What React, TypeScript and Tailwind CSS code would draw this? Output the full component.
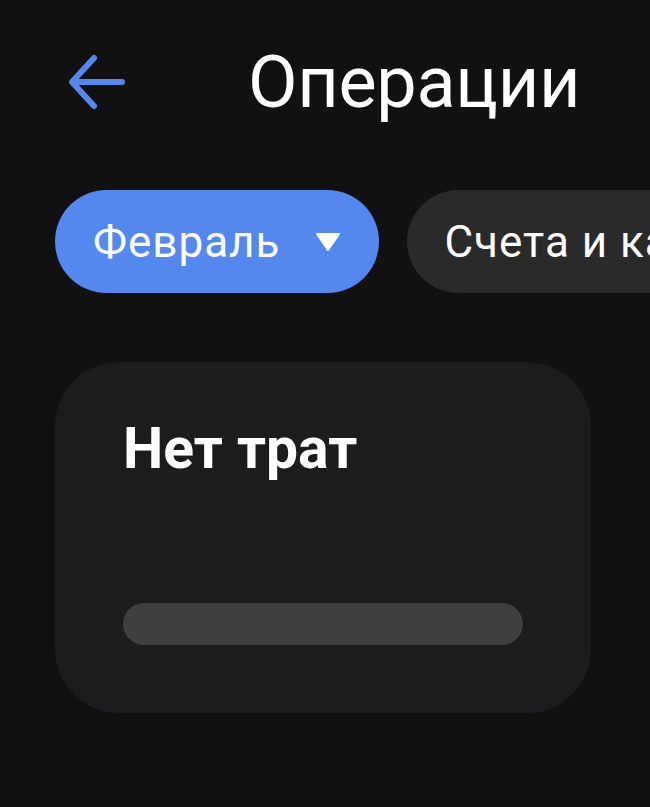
import React from 'react';

export default function App() {
  return (
    <div
      className="w-[650px] h-[807px] overflow-hidden bg-[#111111] text-white"
      style={{ fontFamily: 'Roboto, "Noto Sans", sans-serif' }}
    >
      {/* Header */}
      <div className="flex items-center h-[164px] pl-[64px]">
        <svg width="64" height="64" viewBox="0 0 64 64" fill="none" className="shrink-0">
          <path
            d="M58 32H10M30 8L8 32L30 56"
            stroke="#5588EE"
            strokeWidth="6"
            strokeLinecap="round"
            strokeLinejoin="round"
          />
        </svg>
        <h1 className="ml-[120px] text-[72px] leading-none font-normal tracking-[-0.3px] mt-[2px]">Операции</h1>
      </div>

      {/* Filters */}
      <div className="flex gap-[28px] pl-[55px] mt-[26px]">
        <button className="h-[103px] shrink-0 rounded-full bg-[#5588EE] pl-[38px] pr-[38px] flex items-center gap-[35px]">
          <span className="text-[44px] leading-none tracking-[1px]">Февраль</span>
          <svg width="26" height="20" viewBox="0 0 26 20">
            <path d="M2 2H24L13 18Z" fill="white" stroke="white" strokeWidth="2" strokeLinejoin="round" />
          </svg>
        </button>
        <button className="h-[103px] shrink-0 rounded-full bg-[#2a2a2a] pl-[37px] pr-[40px] flex items-center">
          <span className="text-[44px] leading-none tracking-[1px] whitespace-nowrap">Счета и карты</span>
        </button>
      </div>

      {/* Card */}
      <div className="ml-[55px] mt-[69px] w-[536px] h-[351px] rounded-[64px] bg-[#1c1c1e] pl-[68px] pr-[69px] pt-[58px] flex flex-col">
        <div className="text-[57px] leading-none font-bold">Нет трат</div>
        <div className="mt-auto mb-[68px] h-[42px] w-[400px] rounded-full bg-[#3f3f41]" />
      </div>
    </div>
  );
}
